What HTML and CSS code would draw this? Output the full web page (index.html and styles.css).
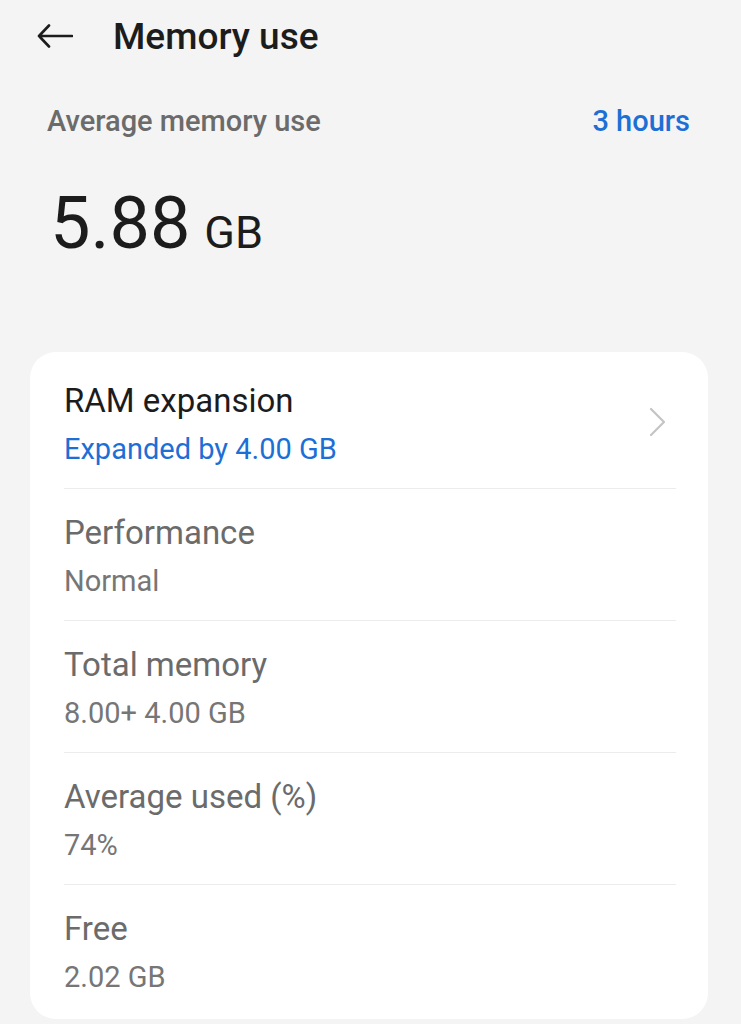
FILE: index.html
```html
<!DOCTYPE html>
<html lang="en">
<head>
    <meta charset="UTF-8">
    <meta name="viewport" content="width=device-width, initial-scale=1.0">
    <title>Memory use</title>
    <link rel="stylesheet" href="styles.css">
</head>
<body>
    <header class="top-bar">
        <svg class="back-icon" viewBox="0 0 36 24" width="36" height="24">
            <path d="M2 12 H35 M12 1.5 L2 12 L12 22.5" fill="none" stroke="#1c1c1c" stroke-width="2.6" stroke-linecap="round" stroke-linejoin="round"/>
        </svg>
        <h1 class="page-title">Memory use</h1>
    </header>

    <div class="summary">
        <span class="summary-label">Average memory use</span>
        <span class="summary-range">3 hours</span>
    </div>
    <div class="big-value">
        <span class="big-number">5.88</span>
        <span class="big-unit">GB</span>
    </div>

    <div class="card">
        <div class="row row-link">
            <div class="row-text">
                <div class="row-title dark">RAM expansion</div>
                <div class="row-value blue">Expanded by 4.00 GB</div>
            </div>
            <svg class="chevron" viewBox="0 0 18 30" width="18" height="30">
                <path d="M2 2 L15 15 L2 28" fill="none" stroke="#c4c4c4" stroke-width="2.2" stroke-linecap="round" stroke-linejoin="round"/>
            </svg>
        </div>
        <div class="row">
            <div class="row-text">
                <div class="row-title">Performance</div>
                <div class="row-value">Normal</div>
            </div>
        </div>
        <div class="row">
            <div class="row-text">
                <div class="row-title">Total memory</div>
                <div class="row-value">8.00+ 4.00 GB</div>
            </div>
        </div>
        <div class="row">
            <div class="row-text">
                <div class="row-title">Average used (%)</div>
                <div class="row-value">74%</div>
            </div>
        </div>
        <div class="row">
            <div class="row-text">
                <div class="row-title">Free</div>
                <div class="row-value">2.02 GB</div>
            </div>
        </div>
    </div>
</body>
</html>
```

FILE: styles.css
```css
:root {
    --bg: #f4f4f4;
    --card: #ffffff;
    --text: #1c1c1c;
    --gray: #6b6b6b;
    --gray-light: #767676;
    --blue: #1d6fd6;
    --line: #ececec;
}
body {
    margin: 0;
    background: var(--bg);
    font-family: Roboto, 'Noto Sans', sans-serif;
    color: var(--text);
    height: 1024px;
    overflow: hidden;
}
.top-bar {
    height: 72px;
    display: flex;
    align-items: center;
    padding-left: 37px;
    gap: 40px;
}
.back-icon {
    flex: none;
}
.page-title {
    margin: 0;
    font-size: 37px;
    font-weight: 500;
    color: var(--text);
}
.summary {
    margin-top: 31px;
    padding: 0 51px 0 47px;
    display: flex;
    justify-content: space-between;
    align-items: center;
    line-height: 36px;
    font-size: 29px;
    font-weight: 500;
}
.summary-label {
    color: var(--gray);
}
.summary-range {
    color: var(--blue);
}
.big-value {
    margin-top: 45px;
    padding-left: 50px;
    line-height: 80px;
    height: 80px;
}
.big-number {
    font-size: 72px;
}
.big-unit {
    font-size: 45px;
    margin-left: 10px;
}
.card {
    margin: 88px 33px 0 30px;
    background: var(--card);
    border-radius: 26px;
    padding-top: 5px;
    padding-bottom: 3px;
}
.row {
    margin: 0 32px 0 34px;
    padding: 24px 0 19px;
    display: flex;
    align-items: center;
    border-top: 1.5px solid var(--line);
}
.row:first-child {
    border-top: none;
}
.row-text {
    flex: 1;
}
.row-title {
    font-size: 33px;
    line-height: 40px;
    color: var(--gray);
}
.row-title.dark {
    color: var(--text);
}
.row-value {
    margin-top: 8px;
    font-size: 29px;
    line-height: 40px;
    color: var(--gray-light);
}
.row-value.blue {
    color: var(--blue);
}
.chevron {
    margin: 0 9px 6px 0;
    flex: none;
}
```
